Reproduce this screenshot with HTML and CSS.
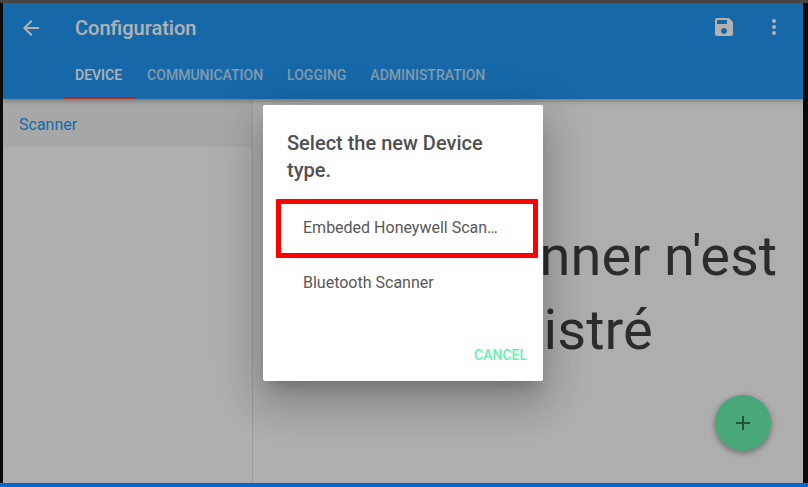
FILE: index.html
```html
<!DOCTYPE html>
<html lang="fr">
<head>
<meta charset="utf-8">
<title>Configuration</title>
<link rel="stylesheet" href="styles.css">
</head>
<body>
<div class="frame">
  <div class="app">
    <header class="appbar">
      <div class="toolbar">
        <svg class="icon back" viewBox="0 0 24 24"><path d="M20 11H7.83l5.59-5.59L12 4l-8 8 8 8 1.41-1.41L7.83 13H20v-2z"/></svg>
        <h1 class="title">Configuration</h1>
        <svg class="icon save" viewBox="0 0 24 24"><path d="M17 3H5c-1.11 0-2 .9-2 2v14c0 1.1.89 2 2 2h14c1.1 0 2-.9 2-2V7l-4-4zm-5 16c-1.66 0-3-1.34-3-3s1.34-3 3-3 3 1.34 3 3-1.34 3-3 3zm3-10H5V5h10v4z"/></svg>
        <svg class="icon more" viewBox="0 0 24 24"><path d="M12 8c1.1 0 2-.9 2-2s-.9-2-2-2-2 .9-2 2 .9 2 2 2zm0 2c-1.1 0-2 .9-2 2s.9 2 2 2 2-.9 2-2-.9-2-2-2zm0 6c-1.1 0-2 .9-2 2s.9 2 2 2 2-.9 2-2-.9-2-2-2z"/></svg>
      </div>
      <nav class="tabs">
        <span class="tab tab-active">DEVICE</span>
        <span class="tab">COMMUNICATION</span>
        <span class="tab">LOGGING</span>
        <span class="tab">ADMINISTRATION</span>
      </nav>
    </header>
    <div class="body">
      <aside class="sidebar">
        <div class="side-item">Scanner</div>
      </aside>
      <main class="content">
        <p class="empty">Aucun scanner n'est<br>enregistré</p>
      </main>
    </div>
    <button class="fab" type="button">
      <svg class="fab-icon" viewBox="0 0 14 14"><path d="M14 8H8v6H6V8H0V6h6V0h2v6h6z"/></svg>
    </button>
    <div class="scrim"></div>
    <section class="dialog">
      <h2 class="dialog-title">Select the new Device type.</h2>
      <ul class="options">
        <li class="option option-marked"><span class="option-text">Embeded Honeywell Scanner</span></li>
        <li class="option"><span class="option-text">Bluetooth Scanner</span></li>
      </ul>
      <div class="actions"><span class="cancel">CANCEL</span></div>
    </section>
  </div>
  <div class="navbar"></div>
</div>
</body>
</html>
```

FILE: styles.css
```css
* { box-sizing: border-box; }
html, body { margin: 0; padding: 0; }
body { background: #111; font-family: Roboto, "Liberation Sans", sans-serif; }

.frame {
  width: 808px;
  height: 487px;
  padding: 3px 5px 0 3px;
  display: flex;
  flex-direction: column;
  overflow: hidden;
  background: linear-gradient(#444 0, #444 3px, #0a0a0a 3px);
}
.app {
  position: relative;
  flex: 1;
  min-height: 0;
  display: flex;
  flex-direction: column;
  background: #fafafa;
  overflow: hidden;
}
.navbar { height: 4px; margin: 0 -5px 0 -3px; background: #0a66c8; flex: none; }

.appbar {
  height: 96px;
  flex: none;
  background: #2196f3;
  color: #fff;
  box-shadow: 0 2px 5px rgba(0,0,0,.3);
  position: relative;
  z-index: 1;
}
.toolbar { display: flex; align-items: flex-start; height: 50px; }
.icon { width: 24px; height: 24px; fill: #fff; flex: none; }
.back { margin: 13px 0 0 16px; }
.title {
  margin: 11px 0 0 32px;
  flex: 1;
  font-size: 20px;
  font-weight: 500;
  line-height: 28px;
  color: #fff;
}
.save { margin-top: 12px; }
.more { margin: 11.5px 17px 0 26px; fill: #fff; }

.tabs { display: flex; padding-left: 61px; height: 46px; }
.tab {
  padding: 14px 12px 0;
  font-size: 14px;
  font-weight: 500;
  line-height: 16px;
  color: rgba(255,255,255,.7);
}
.tab-active {
  color: #fff;
  padding: 14px 13px 0 11px;
  border-bottom: 2px solid #f44336;
}

.body { flex: 1; display: flex; min-height: 0; }
.sidebar { width: 250px; flex: none; border-right: 1px solid #e0e0e0; }
.side-item {
  height: 48px;
  padding: 2px 16px 0;
  display: flex;
  align-items: center;
  font-size: 16px;
  background: #f0f0f0;
  color: #2196f3;
}
.content {
  flex: 1;
  display: flex;
  align-items: center;
  justify-content: center;
  min-width: 0;
  padding-top: 4px;
  overflow: hidden;
}
.empty {
  margin: 0;
  font-size: 56px;
  line-height: 74px;
  font-weight: 400;
  text-align: center;
  white-space: nowrap;
  color: rgba(0,0,0,.75);
}

.fab {
  position: absolute;
  left: 712px;
  top: 392px;
  width: 56px;
  height: 56px;
  border: 0;
  padding: 0;
  border-radius: 50%;
  background: #69f0ae;
  box-shadow: 0 2px 6px rgba(0,0,0,.4);
  display: flex;
  align-items: center;
  justify-content: center;
}
.fab-icon { width: 14px; height: 14px; fill: #2b7a54; }

.scrim { position: absolute; inset: 0; background: rgba(0,0,0,.3); z-index: 2; }

.dialog {
  position: absolute;
  left: 260px;
  top: 102px;
  width: 280px;
  height: 276px;
  background: #fff;
  border-radius: 2px;
  box-shadow: 0 11px 15px -7px rgba(0,0,0,.2), 0 24px 38px 3px rgba(0,0,0,.14), 0 9px 46px 8px rgba(0,0,0,.12);
  z-index: 3;
  display: flex;
  flex-direction: column;
}
.dialog-title {
  margin: 0;
  padding: 25px 24px 0;
  height: 94px;
  font-size: 20px;
  font-weight: 500;
  line-height: 27px;
  color: #505050;
}
.options { list-style: none; margin: 0; padding: 0 5px 0 13px; }
.option {
  height: 49px;
  padding: 0 27px;
  display: flex;
  align-items: center;
  font-size: 16px;
  color: #585858;
}
.option-marked {
  height: 59px;
  padding: 0 35px 2px 22px;
  border: 5px solid #f00;
  border-radius: 1px;
}
.option-text { display: block; overflow: hidden; white-space: nowrap; text-overflow: ellipsis; }
.actions { margin-top: auto; padding: 0 16px 17px; display: flex; justify-content: flex-end; }
.cancel { font-size: 14px; font-weight: 500; line-height: 18px; color: #69f0ae; }
```
